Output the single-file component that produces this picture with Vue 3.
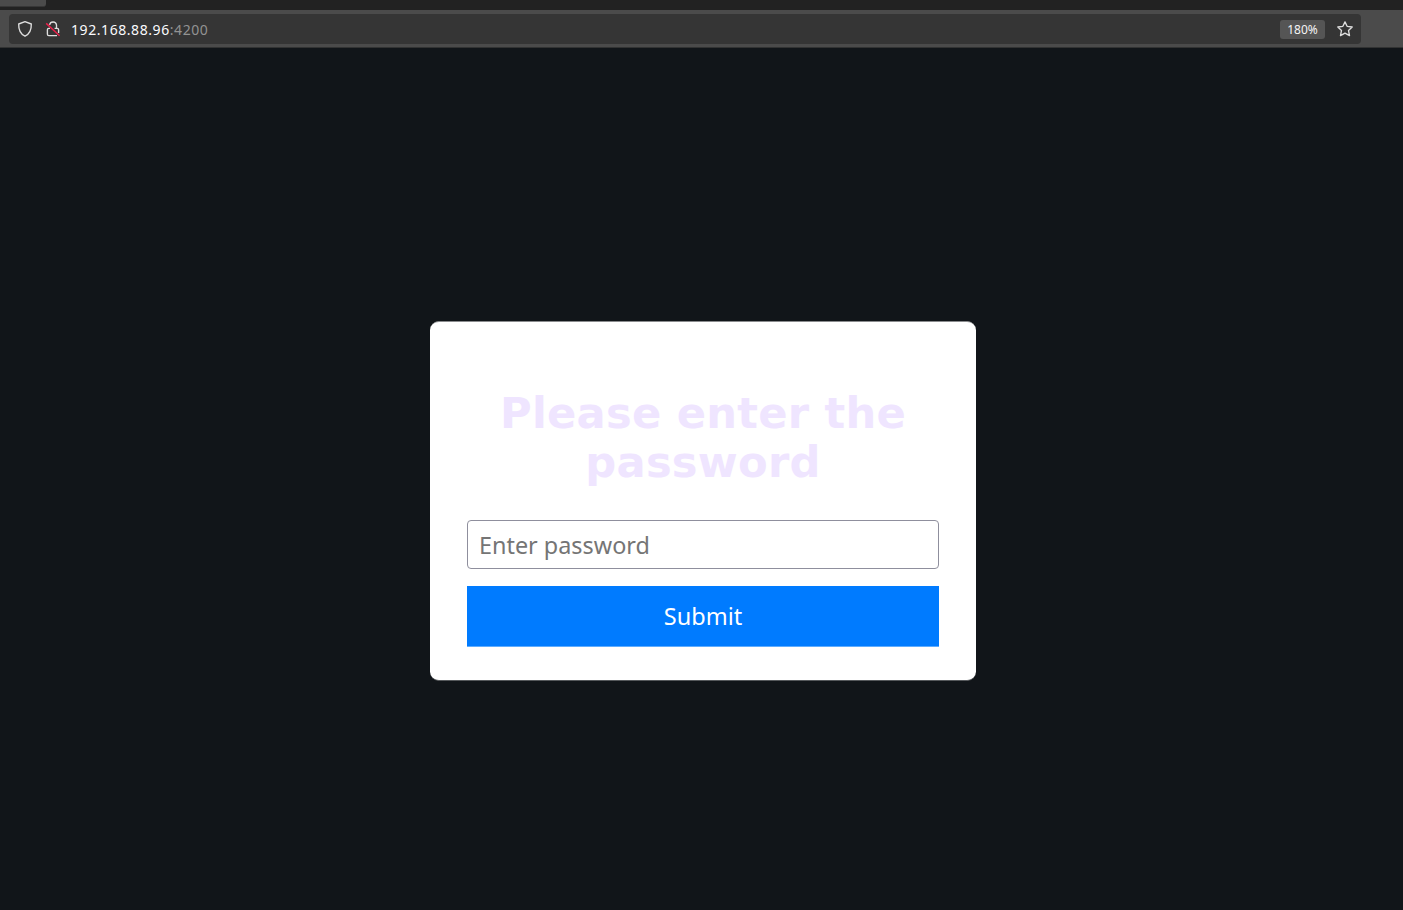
<script setup>
import { ref } from 'vue'

const password = ref('')
</script>

<template>
  <div class="window">
    <div class="tabs"><div class="tab"></div></div>
    <header class="toolbar">
      <div class="urlbar">
        <svg class="shield" width="16" height="18" viewBox="0 0 16 18">
          <path d="M8 1.6 L14.3 4 C14.5 9.8 12.8 13.9 8 16.2 C3.2 13.9 1.5 9.8 1.7 4 Z" />
        </svg>
        <svg class="lock" width="16" height="18" viewBox="0 0 16 18">
          <path d="M4.6 4.9 A3.5 3.5 0 0 1 11.5 5 V8.4" />
          <path d="M9.6 8.4 H12.2 Q13.6 8.4 13.6 9.8 V13" />
          <path d="M5 8.4 H3.8 Q2.4 8.4 2.4 9.8 V14.2 Q2.4 15.6 3.8 15.6 H12" />
          <path class="slash" d="M1.2 3.4 L14.6 15.8" />
        </svg>
        <span class="address">192.168.88.96<span class="port">:4200</span></span>
        <span class="zoom">180%</span>
        <svg class="star" width="18" height="18" viewBox="0 0 18 18">
          <path d="M9 1.9 L11.1 6.3 L16.2 7 L12.5 10.4 L13.5 15.6 L9 13.2 L4.5 15.6 L5.5 10.4 L1.8 7 L6.9 6.3 Z" />
        </svg>
      </div>
    </header>
    <main class="page">
      <form class="card" @submit.prevent>
        <h2 class="title">Please enter the password</h2>
        <input v-model="password" class="field" type="password" placeholder="Enter password" />
        <button class="submit" type="submit">Submit</button>
      </form>
    </main>
  </div>
</template>

<style>
body {
  margin: 0;
  background: #111519;
}
</style>

<style scoped>
.window {
  display: flex;
  flex-direction: column;
  height: 910px;
  overflow: hidden;
  background: #111519;
  font-family: "Noto Sans", sans-serif;
}
.tabs {
  height: 10px;
  flex: none;
  background: #222222;
}
.tab {
  width: 46px;
  height: 7px;
  background: #4b4b4b;
  border-bottom: 1px solid #373737;
  border-radius: 0 0 3px 0;
  box-sizing: border-box;
}
.toolbar {
  height: 38px;
  flex: none;
  box-sizing: border-box;
  padding: 4px 42px 4px 9px;
  background: #4b4b4b;
  border-bottom: 1px solid #323333;
}
.urlbar {
  display: flex;
  align-items: center;
  height: 30px;
  box-sizing: border-box;
  padding: 0 7px 0 8px;
  border-radius: 4px;
  background: #353535;
}
svg {
  flex: none;
  fill: none;
  stroke: #dedede;
  stroke-width: 1.35;
  stroke-linejoin: round;
}
.lock {
  margin-left: 12px;
}
.slash {
  stroke: #e8204a;
  stroke-width: 1.5;
}
.address {
  margin-left: 10px;
  color: #fbfbfe;
  font-size: 14px;
  letter-spacing: 0.57px;
  white-space: nowrap;
}
.port {
  color: #929292;
}
.zoom {
  width: 45px;
  height: 19px;
  margin-left: auto;
  border-radius: 3px;
  background: #555555;
  color: #f4f4f4;
  font-size: 12px;
  line-height: 19px;
  text-align: center;
}
.star {
  margin-left: 11px;
}
.page {
  display: flex;
  flex: 1;
  align-items: flex-start;
  justify-content: center;
  padding: 273px 0 0 3px;
}
.card {
  display: flex;
  flex-direction: column;
  width: 546px;
  height: 360px;
  box-sizing: border-box;
  padding: 67px 37px 0;
  border-top: 1px solid #8a8c8e;
  border-bottom: 1px solid #55585b;
  border-radius: 9px;
  background: #ffffff;
}
.title {
  margin: 0;
  color: #efe5ff;
  font-family: "DejaVu Sans", sans-serif;
  font-size: 43.2px;
  font-weight: 700;
  line-height: 49px;
  letter-spacing: 0.25px;
  text-align: center;
}
.field {
  height: 49px;
  margin: 33px 0 0;
  box-sizing: border-box;
  padding: 0 11px;
  border: 1px solid #8f8f9d;
  border-radius: 4px;
  outline: none;
  background: #ffffff;
  font-family: inherit;
  font-size: 23.4px;
}
.field::placeholder {
  color: #757575;
  opacity: 1;
}
.submit {
  height: 61px;
  margin: 17px 0 0;
  padding: 0 0 1px;
  border: 0;
  border-bottom: 1px solid #5eacff;
  background: #007bff;
  color: #ffffff;
  font-family: inherit;
  font-size: 23.5px;
}
</style>
